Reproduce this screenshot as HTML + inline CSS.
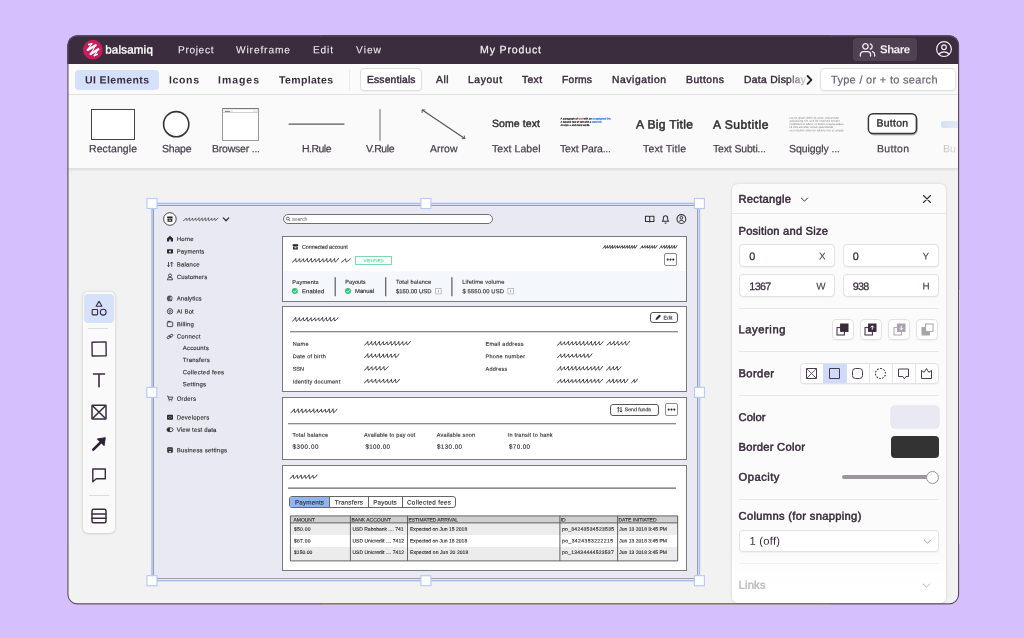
<!DOCTYPE html>
<html lang="en"><head><meta charset="utf-8"><title>Balsamiq - My Product</title>
<style>
*{margin:0;padding:0}
html,body{width:1024px;height:638px;overflow:hidden}
body{background:#d5bffc;font-family:"Liberation Sans",sans-serif;position:relative}
.b{position:absolute;display:block}
.x{overflow:visible}
text{white-space:pre}
#win{position:absolute;left:0;top:0;width:1024px;height:638px;clip-path:inset(35.3px 64.8px 33.6px 67.3px round 10px);background:#f2f2f2;will-change:transform}
</style></head>
<body>
<div id="win">
<div class="b" style="left:67.0px;top:35.0px;width:892.0px;height:28.5px;background:#3b2c3e"></div>
<svg class="b" style="left:82px;top:39px" width="22" height="22" viewBox="0 0 22 22">
<circle cx="10.9" cy="10.7" r="9.9" fill="#c81c5b"/>
<g fill="none" stroke="#fff" stroke-linecap="round" stroke-linejoin="round">
<path stroke-width="2.3" d="M5.7 10.9 L13.6 6.2"/><path stroke-width="2.3" d="M8.6 15.0 L16.3 10.3"/>
<path stroke-width="1.5" d="M6.7 5.5 L9.8 4.6 M12.3 16.6 L15.3 15.2"/>
<path stroke-width="1.1" d="M9.8 4.6 L5.7 10.9 M13.6 6.2 L8.6 15 M16.3 10.3 L12.3 16.6"/>
</g></svg>
<svg class="b x" style="left:103px;top:40px" width="56" height="23"><text x="2.20" y="13.54" transform="rotate(0.03 2.20 13.54)" style="font-size:11.50px;letter-spacing:0.225px" fill="#fff" stroke="#fff" stroke-width="0.38" stroke-linejoin="round">balsamiq</text></svg>
<svg class="b x" style="left:176px;top:40px" width="44" height="21"><text x="2.00" y="13.17" transform="rotate(0.03 2.00 13.17)" style="font-size:10.20px;letter-spacing:0.626px" fill="#efe9f1" stroke="#efe9f1" stroke-width="0.08" stroke-linejoin="round">Project</text></svg>
<svg class="b x" style="left:234px;top:40px" width="62" height="21"><text x="2.00" y="13.17" transform="rotate(0.03 2.00 13.17)" style="font-size:10.20px;letter-spacing:0.871px" fill="#efe9f1" stroke="#efe9f1" stroke-width="0.08" stroke-linejoin="round">Wireframe</text></svg>
<svg class="b x" style="left:311px;top:40px" width="28" height="21"><text x="2.00" y="13.17" transform="rotate(0.03 2.00 13.17)" style="font-size:10.20px;letter-spacing:0.808px" fill="#efe9f1" stroke="#efe9f1" stroke-width="0.08" stroke-linejoin="round">Edit</text></svg>
<svg class="b x" style="left:354px;top:40px" width="33" height="21"><text x="2.00" y="13.17" transform="rotate(0.03 2.00 13.17)" style="font-size:10.20px;letter-spacing:1.025px" fill="#efe9f1" stroke="#efe9f1" stroke-width="0.08" stroke-linejoin="round">View</text></svg>
<svg class="b x" style="left:478px;top:40px" width="69" height="21"><text x="2.00" y="13.32" transform="rotate(0.03 2.00 13.32)" style="font-size:10.60px;letter-spacing:0.822px" fill="#f4eff5" stroke="#f4eff5" stroke-width="0.22" stroke-linejoin="round">My Product</text></svg>
<div class="b" style="left:853.0px;top:38.0px;width:63.5px;height:23.0px;background:#4f4052;border-radius:4px"></div>
<svg class="b" style="left:859px;top:42px" width="17" height="15" viewBox="0 0 24 22" fill="none" stroke="#f3eef4" stroke-width="1.9" stroke-linecap="round" stroke-linejoin="round">
<circle cx="9" cy="6.5" r="4"/><path d="M1.5 20.5v-2a4.5 4.5 0 0 1 4.500-4.5h6a4.500 4.500 0 0 1 4.500 4.500v2"/><path d="M16 2.700a4 4 0 0 1 0 7.700"/><path d="M22.500 20.500v-2a4.500 4.500 0 0 0-3.300-4.300"/></svg>
<svg class="b x" style="left:878px;top:39px" width="38" height="22"><text x="2.00" y="14.20" transform="rotate(0.03 2.00 14.20)" style="font-size:11.40px;letter-spacing:-0.421px;font-weight:700" fill="#f3eef4">Share</text></svg>
<svg class="b" style="left:935px;top:40px" width="18" height="18" viewBox="0 0 18 18" fill="none" stroke="#f3eef4" stroke-width="1.2">
<circle cx="9" cy="9.1" r="7.4"/><circle cx="9" cy="7.2" r="2.3"/><path d="M3.6 14.700a6.500 6.500 0 0 1 10.800 0"/></svg>
<div class="b" style="left:67.0px;top:63.5px;width:892.0px;height:30.5px;background:#fbfbfb;border-bottom:1px solid #e3e3e3"></div>
<div class="b" style="left:75.0px;top:70.0px;width:84.0px;height:20.0px;background:#d5e0fa;border-radius:4px"></div>
<svg class="b x" style="left:83px;top:71px" width="72" height="21"><text x="2.00" y="12.53" transform="rotate(0.03 2.00 12.53)" style="font-size:10.50px;letter-spacing:0.390px;font-weight:700" fill="#3a2b3d">UI Elements</text></svg>
<svg class="b x" style="left:167px;top:71px" width="38" height="21"><text x="2.00" y="12.53" transform="rotate(0.03 2.00 12.53)" style="font-size:10.50px;letter-spacing:0.644px;font-weight:700" fill="#3a2b3d">Icons</text></svg>
<svg class="b x" style="left:216px;top:71px" width="49" height="21"><text x="2.00" y="12.53" transform="rotate(0.03 2.00 12.53)" style="font-size:10.50px;letter-spacing:0.963px;font-weight:700" fill="#3a2b3d">Images</text></svg>
<svg class="b x" style="left:277px;top:71px" width="62" height="21"><text x="2.00" y="12.53" transform="rotate(0.03 2.00 12.53)" style="font-size:10.50px;letter-spacing:0.355px;font-weight:700" fill="#3a2b3d">Templates</text></svg>
<div class="b" style="left:349.0px;top:69.0px;width:1.0px;height:22.0px;background:#ebebeb"></div>
<div class="b" style="left:360.0px;top:68.0px;width:62.0px;height:22.5px;background:#fff;border:1px solid #e0e0e0;border-radius:4px;box-sizing:border-box;box-shadow:0 1px 1px rgba(0,0,0,.05)"></div>
<svg class="b x" style="left:365px;top:70px" width="57" height="21"><text x="2.00" y="13.01" transform="rotate(0.03 2.00 13.01)" style="font-size:10.30px;letter-spacing:0.173px" fill="#3a2b3d" stroke="#3a2b3d" stroke-width="0.42" stroke-linejoin="round">Essentials</text></svg>
<svg class="b x" style="left:434px;top:70px" width="21" height="21"><text x="2.00" y="13.01" transform="rotate(0.03 2.00 13.01)" style="font-size:10.30px;letter-spacing:0.527px" fill="#3a2b3d" stroke="#3a2b3d" stroke-width="0.42" stroke-linejoin="round">All</text></svg>
<svg class="b x" style="left:466px;top:70px" width="42" height="21"><text x="2.00" y="13.01" transform="rotate(0.03 2.00 13.01)" style="font-size:10.30px;letter-spacing:0.615px" fill="#3a2b3d" stroke="#3a2b3d" stroke-width="0.42" stroke-linejoin="round">Layout</text></svg>
<svg class="b x" style="left:520px;top:70px" width="28" height="21"><text x="2.00" y="13.01" transform="rotate(0.03 2.00 13.01)" style="font-size:10.30px;letter-spacing:0.370px" fill="#3a2b3d" stroke="#3a2b3d" stroke-width="0.42" stroke-linejoin="round">Text</text></svg>
<svg class="b x" style="left:560px;top:70px" width="38" height="21"><text x="2.00" y="13.01" transform="rotate(0.03 2.00 13.01)" style="font-size:10.30px;letter-spacing:0.205px" fill="#3a2b3d" stroke="#3a2b3d" stroke-width="0.42" stroke-linejoin="round">Forms</text></svg>
<svg class="b x" style="left:610px;top:70px" width="62" height="21"><text x="2.00" y="13.01" transform="rotate(0.03 2.00 13.01)" style="font-size:10.30px;letter-spacing:0.592px" fill="#3a2b3d" stroke="#3a2b3d" stroke-width="0.42" stroke-linejoin="round">Navigation</text></svg>
<svg class="b x" style="left:684px;top:70px" width="46" height="21"><text x="2.00" y="13.01" transform="rotate(0.03 2.00 13.01)" style="font-size:10.30px;letter-spacing:0.512px" fill="#3a2b3d" stroke="#3a2b3d" stroke-width="0.42" stroke-linejoin="round">Buttons</text></svg>
<svg class="b x" style="left:742px;top:70px" width="70" height="21"><text x="2.00" y="13.01" transform="rotate(0.03 2.00 13.01)" style="font-size:10.30px;letter-spacing:0.328px" fill="#3a2b3d" stroke="#3a2b3d" stroke-width="0.42" stroke-linejoin="round">Data Display</text></svg>
<div class="b" style="left:786.0px;top:66.0px;width:26.0px;height:27.0px;background:linear-gradient(90deg,rgba(251,251,251,0),rgba(251,251,251,.8) 75%,#fbfbfb)"></div>
<svg class="b" style="left:805px;top:74px" width="10" height="12" viewBox="0 0 10 12" fill="none" stroke="#2c2030" stroke-width="1.900" stroke-linecap="round" stroke-linejoin="round"><path d="M2.600 2 L6.400 5.900 L2.600 9.800"/></svg>
<div class="b" style="left:820.0px;top:68.0px;width:135.5px;height:22.5px;background:#fff;border:1px solid #e0e0e0;border-radius:4px;box-sizing:border-box;box-shadow:0 1px 1px rgba(0,0,0,.05)"></div>
<svg class="b x" style="left:829px;top:70px" width="115" height="22"><text x="2.00" y="13.56" transform="rotate(0.03 2.00 13.56)" style="font-size:11.00px;letter-spacing:0.296px" fill="#6f6374" stroke="#6f6374" stroke-width="0.2" stroke-linejoin="round">Type / or + to search</text></svg>
<div class="b" style="left:67.0px;top:95.0px;width:892.0px;height:73.0px;background:#fafafa;border-bottom:1px solid #e0e0e0;box-shadow:0 1px 2.5px rgba(0,0,0,.09)"></div>
<div class="b" style="left:91.0px;top:109.0px;width:44.0px;height:31.0px;background:#fff;border:1px solid #444;box-sizing:border-box"></div>
<svg class="b x" style="left:87px;top:139px" width="56" height="21"><text x="2.00" y="13.18" transform="rotate(0.03 2.00 13.18)" style="font-size:10.50px;letter-spacing:0.090px" fill="#4a3d4e" stroke="#4a3d4e" stroke-width="0.22" stroke-linejoin="round">Rectangle</text></svg>
<svg class="b" style="left:160px;top:108px" width="32" height="32"><circle cx="16.2" cy="16.2" r="12.6" fill="#fff" stroke="#333" stroke-width="1.6"/></svg>
<svg class="b x" style="left:160px;top:139px" width="38" height="21"><text x="2.00" y="13.18" transform="rotate(0.03 2.00 13.18)" style="font-size:10.50px;letter-spacing:-0.216px" fill="#4a3d4e" stroke="#4a3d4e" stroke-width="0.22" stroke-linejoin="round">Shape</text></svg>
<div class="b" style="left:222.0px;top:108.0px;width:37.0px;height:32.5px;background:#fff;border:1px solid #9a9a9a;border-top:1.5px solid #777;box-sizing:border-box"><div class="b" style="left:0;top:0;width:35px;height:3px;background:#ececec;border-bottom:1px solid #d2d2d2"></div><div class="b" style="left:2px;top:1.5px;width:5px;height:1.2px;background:#888"></div><div class="b" style="left:10px;top:1px;width:20px;height:1.5px;background:#fff"></div></div>
<svg class="b x" style="left:210px;top:139px" width="56" height="21"><text x="2.00" y="13.18" transform="rotate(0.03 2.00 13.18)" style="font-size:10.50px;letter-spacing:-0.218px" fill="#4a3d4e" stroke="#4a3d4e" stroke-width="0.22" stroke-linejoin="round">Browser ...</text></svg>
<svg class="b" style="left:285px;top:120px" width="64" height="8"><path d="M4 4.100 H59" stroke="#585858" stroke-width="1.250" stroke-linecap="round"/></svg>
<svg class="b x" style="left:300px;top:139px" width="38" height="21"><text x="2.00" y="13.18" transform="rotate(0.03 2.00 13.18)" style="font-size:10.50px;letter-spacing:-0.519px" fill="#4a3d4e" stroke="#4a3d4e" stroke-width="0.22" stroke-linejoin="round">H.Rule</text></svg>
<svg class="b" style="left:376px;top:105px" width="8" height="40"><path d="M4 4.300 V35.700" stroke="#707070" stroke-width="1.050"/></svg>
<svg class="b x" style="left:364px;top:139px" width="37" height="21"><text x="2.00" y="13.18" transform="rotate(0.03 2.00 13.18)" style="font-size:10.50px;letter-spacing:-0.410px" fill="#4a3d4e" stroke="#4a3d4e" stroke-width="0.22" stroke-linejoin="round">V.Rule</text></svg>
<svg class="b" style="left:418px;top:106px" width="52" height="36" viewBox="0 0 52 36" fill="none" stroke="#555" stroke-width="1.2" stroke-linecap="round" stroke-linejoin="round"><path d="M4.3 4.100 L46.700 32.400"/><path stroke-width="0.9" d="M4.100 6.600 L4.100 3.900 L6.900 4"/><path stroke-width="0.9" d="M44.100 32.700 L46.900 32.600 L46.300 29.900"/></svg>
<svg class="b x" style="left:428px;top:139px" width="36" height="21"><text x="2.00" y="13.18" transform="rotate(0.03 2.00 13.18)" style="font-size:10.50px;letter-spacing:0.020px" fill="#4a3d4e" stroke="#4a3d4e" stroke-width="0.22" stroke-linejoin="round">Arrow</text></svg>
<svg class="b x" style="left:490px;top:114px" width="56" height="21"><text x="2.00" y="12.88" transform="rotate(0.03 2.00 12.88)" style="font-size:10.50px;letter-spacing:0.091px" fill="#2f2f2f" stroke="#2f2f2f" stroke-width="0.4" stroke-linejoin="round">Some text</text></svg>
<svg class="b x" style="left:490px;top:139px" width="57" height="21"><text x="2.00" y="13.18" transform="rotate(0.03 2.00 13.18)" style="font-size:10.50px;letter-spacing:0.071px" fill="#4a3d4e" stroke="#4a3d4e" stroke-width="0.22" stroke-linejoin="round">Text Label</text></svg>
<svg class="b x" style="left:558px;top:114px" width="26" height="10"><text x="2.60" y="5.58" transform="rotate(0.03 2.60 5.58)" style="font-size:2.60px;letter-spacing:0.013px" fill="#2a2a2a" stroke="#2a2a2a" stroke-width="0.2" stroke-linejoin="round">A paragraph of</text></svg>
<svg class="b x" style="left:576px;top:114px" width="13" height="10"><text x="2.56" y="5.58" transform="rotate(0.03 2.56 5.58)" style="font-size:2.60px;letter-spacing:0.014px" fill="#e0453a" stroke="#e0453a" stroke-width="0.2" stroke-linejoin="round">text</text></svg>
<svg class="b x" style="left:581px;top:114px" width="17" height="10"><text x="2.52" y="5.58" transform="rotate(0.03 2.52 5.58)" style="font-size:2.60px;letter-spacing:0.014px" fill="#2a2a2a" stroke="#2a2a2a" stroke-width="0.2" stroke-linejoin="round">with an</text></svg>
<svg class="b x" style="left:590px;top:114px" width="27" height="10"><text x="2.57" y="5.58" transform="rotate(0.03 2.57 5.58)" style="font-size:2.60px;letter-spacing:0.012px" fill="#3a78d8" stroke="#3a78d8" stroke-width="0.2" stroke-linejoin="round">unassigned link.</text></svg>
<svg class="b x" style="left:558px;top:118px" width="39" height="10"><text x="2.60" y="4.78" transform="rotate(0.03 2.60 4.78)" style="font-size:2.60px;letter-spacing:-0.005px" fill="#2a2a2a" stroke="#2a2a2a" stroke-width="0.2" stroke-linejoin="round">A second row of text with a</text></svg>
<svg class="b x" style="left:590px;top:118px" width="19" height="10"><text x="2.12" y="4.78" transform="rotate(0.03 2.12 4.78)" style="font-size:2.60px;letter-spacing:-0.005px" fill="#3a78d8" stroke="#3a78d8" stroke-width="0.2" stroke-linejoin="round">web link.</text></svg>
<svg class="b x" style="left:558px;top:121px" width="17" height="10"><text x="2.60" y="4.98" transform="rotate(0.03 2.60 4.98)" style="font-size:2.60px;letter-spacing:-0.077px" fill="#2a2a2a" stroke="#2a2a2a" stroke-width="0.2" stroke-linejoin="round">An icon</text></svg>
<svg class="b x" style="left:567px;top:121px" width="10" height="10"><text x="2.49" y="4.98" transform="rotate(0.03 2.49 4.98)" style="font-size:2.60px" fill="#2a2a2a" stroke="#2a2a2a" stroke-width="0.2" stroke-linejoin="round">●</text></svg>
<svg class="b x" style="left:569px;top:121px" width="27" height="10"><text x="2.67" y="4.98" transform="rotate(0.03 2.67 4.98)" style="font-size:2.60px;letter-spacing:-0.074px" fill="#2a2a2a" stroke="#2a2a2a" stroke-width="0.2" stroke-linejoin="round">and more words.</text></svg>
<svg class="b x" style="left:558px;top:139px" width="59" height="21"><text x="2.00" y="13.18" transform="rotate(0.03 2.00 13.18)" style="font-size:10.50px;letter-spacing:-0.191px" fill="#4a3d4e" stroke="#4a3d4e" stroke-width="0.22" stroke-linejoin="round">Text Para...</text></svg>
<svg class="b x" style="left:634px;top:114px" width="65" height="23"><text x="2.00" y="14.46" transform="rotate(0.03 2.00 14.46)" style="font-size:12.10px;letter-spacing:0.319px" fill="#2f2f2f" stroke="#2f2f2f" stroke-width="0.5" stroke-linejoin="round">A Big Title</text></svg>
<svg class="b x" style="left:641px;top:139px" width="51" height="21"><text x="2.00" y="13.18" transform="rotate(0.03 2.00 13.18)" style="font-size:10.50px;letter-spacing:0.174px" fill="#4a3d4e" stroke="#4a3d4e" stroke-width="0.22" stroke-linejoin="round">Text Title</text></svg>
<svg class="b x" style="left:711px;top:114px" width="64" height="23"><text x="2.00" y="14.66" transform="rotate(0.03 2.00 14.66)" style="font-size:12.10px;letter-spacing:0.486px" fill="#2f2f2f" stroke="#2f2f2f" stroke-width="0.5" stroke-linejoin="round">A Subtitle</text></svg>
<svg class="b x" style="left:711px;top:139px" width="61" height="21"><text x="2.00" y="13.18" transform="rotate(0.03 2.00 13.18)" style="font-size:10.50px;letter-spacing:-0.155px" fill="#4a3d4e" stroke="#4a3d4e" stroke-width="0.22" stroke-linejoin="round">Text Subti...</text></svg>
<svg class="b x" style="left:787px;top:114px" width="58" height="10"><text x="2.50" y="4.70" transform="rotate(0.03 2.50 4.70)" style="font-size:2.70px;letter-spacing:0.052px" fill="#727272">Lorem ipsum dolor sit amet, consectetur</text></svg>
<svg class="b x" style="left:787px;top:117px" width="59" height="10"><text x="2.50" y="4.82" transform="rotate(0.03 2.50 4.82)" style="font-size:2.70px;letter-spacing:0.105px" fill="#727272">adipisicing elit, sed do eiusmod tempor</text></svg>
<svg class="b x" style="left:787px;top:120px" width="63" height="10"><text x="2.50" y="4.94" transform="rotate(0.03 2.50 4.94)" style="font-size:2.70px;letter-spacing:0.078px" fill="#727272">incididunt ut labore et dolore magna aliqua.</text></svg>
<svg class="b x" style="left:787px;top:123px" width="52" height="10"><text x="2.50" y="5.06" transform="rotate(0.03 2.50 5.06)" style="font-size:2.70px;letter-spacing:-0.088px" fill="#727272">Ut enim ad minim veniam, quis nostrud</text></svg>
<svg class="b x" style="left:787px;top:126px" width="63" height="10"><text x="2.50" y="5.18" transform="rotate(0.03 2.50 5.18)" style="font-size:2.70px;letter-spacing:0.130px" fill="#727272">exercitation ullamco laboris nisi ut aliquip</text></svg>
<svg class="b x" style="left:787px;top:139px" width="59" height="21"><text x="2.00" y="13.18" transform="rotate(0.03 2.00 13.18)" style="font-size:10.50px;letter-spacing:-0.086px" fill="#4a3d4e" stroke="#4a3d4e" stroke-width="0.22" stroke-linejoin="round">Squiggly ...</text></svg>
<svg class="b" style="left:864px;top:110px" width="58" height="30"><rect x="5.2" y="4.6" width="48" height="20.300" rx="4.600" fill="#bbb" stroke="#aaa" stroke-width="1"/><rect x="4.400" y="3.700" width="48" height="19.900" rx="4.600" fill="#fff" stroke="#383838" stroke-width="1.500"/></svg>
<svg class="b x" style="left:874px;top:114px" width="40" height="21"><text x="2.50" y="12.44" transform="rotate(0.03 2.50 12.44)" style="font-size:10.40px;letter-spacing:0.286px" fill="#2b2b2b" stroke="#2b2b2b" stroke-width="0.35" stroke-linejoin="round">Button</text></svg>
<svg class="b x" style="left:875px;top:139px" width="40" height="21"><text x="2.00" y="13.18" transform="rotate(0.03 2.00 13.18)" style="font-size:10.50px;letter-spacing:0.329px" fill="#4a3d4e" stroke="#4a3d4e" stroke-width="0.22" stroke-linejoin="round">Button</text></svg>
<div class="b" style="left:941.0px;top:120.8px;width:20.0px;height:7.6px;background:#c4d5f3;border-radius:2px"></div>
<svg class="b x" style="left:941px;top:139px" width="21" height="21"><text x="2.00" y="13.18" transform="rotate(0.03 2.00 13.18)" style="font-size:10.50px" fill="#4a3d4e" opacity="0.45">Bu</text></svg>
<div class="b" style="left:925.0px;top:96.0px;width:34.0px;height:71.0px;background:linear-gradient(90deg,rgba(250,250,250,0),rgba(250,250,250,.6))"></div>
<div class="b" style="left:152.0px;top:204.0px;width:547.0px;height:376.5px;background:#e9e9f3"></div>
<div class="b" style="left:153.0px;top:205.0px;width:545.0px;height:374.4px;background:#e9e9f3;border:1px solid #a0a0a4;box-sizing:border-box"></div>
<svg class="b x" style="left:174px;top:232px" width="25" height="15"><text x="2.70" y="8.96" transform="rotate(0.03 2.70 8.96)" style="font-size:6.00px;letter-spacing:0.298px" fill="#2e2e2e" stroke="#2e2e2e" stroke-width="0.14" stroke-linejoin="round">Home</text></svg>
<svg class="b x" style="left:174px;top:245px" width="36" height="15"><text x="2.70" y="8.56" transform="rotate(0.03 2.70 8.56)" style="font-size:6.00px;letter-spacing:0.117px" fill="#2e2e2e" stroke="#2e2e2e" stroke-width="0.14" stroke-linejoin="round">Payments</text></svg>
<svg class="b x" style="left:174px;top:258px" width="31" height="15"><text x="2.70" y="8.56" transform="rotate(0.03 2.70 8.56)" style="font-size:6.00px;letter-spacing:0.220px" fill="#2e2e2e" stroke="#2e2e2e" stroke-width="0.14" stroke-linejoin="round">Balance</text></svg>
<svg class="b x" style="left:174px;top:270px" width="39" height="15"><text x="2.70" y="8.96" transform="rotate(0.03 2.70 8.96)" style="font-size:6.00px;letter-spacing:0.187px" fill="#2e2e2e" stroke="#2e2e2e" stroke-width="0.14" stroke-linejoin="round">Customers</text></svg>
<svg class="b x" style="left:174px;top:292px" width="33" height="15"><text x="2.70" y="8.56" transform="rotate(0.03 2.70 8.56)" style="font-size:6.00px;letter-spacing:0.099px" fill="#2e2e2e" stroke="#2e2e2e" stroke-width="0.14" stroke-linejoin="round">Analytics</text></svg>
<svg class="b x" style="left:174px;top:305px" width="26" height="15"><text x="2.70" y="8.46" transform="rotate(0.03 2.70 8.46)" style="font-size:6.00px;letter-spacing:0.152px" fill="#2e2e2e" stroke="#2e2e2e" stroke-width="0.14" stroke-linejoin="round">AI Bot</text></svg>
<svg class="b x" style="left:174px;top:318px" width="26" height="15"><text x="2.70" y="8.16" transform="rotate(0.03 2.70 8.16)" style="font-size:6.00px;letter-spacing:0.182px" fill="#2e2e2e" stroke="#2e2e2e" stroke-width="0.14" stroke-linejoin="round">Billing</text></svg>
<svg class="b x" style="left:174px;top:330px" width="32" height="15"><text x="2.70" y="8.56" transform="rotate(0.03 2.70 8.56)" style="font-size:6.00px;letter-spacing:0.242px" fill="#2e2e2e" stroke="#2e2e2e" stroke-width="0.14" stroke-linejoin="round">Connect</text></svg>
<svg class="b x" style="left:174px;top:392px" width="28" height="15"><text x="2.70" y="8.66" transform="rotate(0.03 2.70 8.66)" style="font-size:6.00px;letter-spacing:0.193px" fill="#2e2e2e" stroke="#2e2e2e" stroke-width="0.14" stroke-linejoin="round">Orders</text></svg>
<svg class="b x" style="left:174px;top:411px" width="41" height="15"><text x="2.70" y="8.46" transform="rotate(0.03 2.70 8.46)" style="font-size:6.00px;letter-spacing:0.250px" fill="#2e2e2e" stroke="#2e2e2e" stroke-width="0.14" stroke-linejoin="round">Developers</text></svg>
<svg class="b x" style="left:174px;top:423px" width="48" height="15"><text x="2.70" y="8.86" transform="rotate(0.03 2.70 8.86)" style="font-size:6.00px;letter-spacing:0.163px" fill="#2e2e2e" stroke="#2e2e2e" stroke-width="0.14" stroke-linejoin="round">View test data</text></svg>
<svg class="b x" style="left:174px;top:444px" width="59" height="15"><text x="2.70" y="8.16" transform="rotate(0.03 2.70 8.16)" style="font-size:6.00px;letter-spacing:0.226px" fill="#2e2e2e" stroke="#2e2e2e" stroke-width="0.14" stroke-linejoin="round">Business settings</text></svg>
<svg class="b x" style="left:180px;top:341px" width="34" height="15"><text x="2.80" y="8.96" transform="rotate(0.03 2.80 8.96)" style="font-size:6.00px;letter-spacing:0.174px" fill="#2e2e2e" stroke="#2e2e2e" stroke-width="0.14" stroke-linejoin="round">Accounts</text></svg>
<svg class="b x" style="left:180px;top:353px" width="35" height="15"><text x="2.80" y="8.96" transform="rotate(0.03 2.80 8.96)" style="font-size:6.00px;letter-spacing:0.223px" fill="#2e2e2e" stroke="#2e2e2e" stroke-width="0.14" stroke-linejoin="round">Transfers</text></svg>
<svg class="b x" style="left:180px;top:366px" width="50" height="15"><text x="2.80" y="8.16" transform="rotate(0.03 2.80 8.16)" style="font-size:6.00px;letter-spacing:0.244px" fill="#2e2e2e" stroke="#2e2e2e" stroke-width="0.14" stroke-linejoin="round">Collected fees</text></svg>
<svg class="b x" style="left:180px;top:378px" width="32" height="15"><text x="2.80" y="8.16" transform="rotate(0.03 2.80 8.16)" style="font-size:6.00px;letter-spacing:0.217px" fill="#2e2e2e" stroke="#2e2e2e" stroke-width="0.14" stroke-linejoin="round">Settings</text></svg>
<div class="b" style="left:283.0px;top:214.0px;width:210.4px;height:10.0px;background:#fff;border:1px solid #707070;border-radius:5px;box-sizing:border-box"></div>
<svg class="b x" style="left:290px;top:213px" width="24" height="14"><text x="2.00" y="7.77" transform="rotate(0.03 2.00 7.77)" style="font-size:5.20px;letter-spacing:-0.022px" fill="#8a8a8a" stroke="#8a8a8a" stroke-width="0.14" stroke-linejoin="round">search</text></svg>
<div class="b" style="left:282.0px;top:236.0px;width:405.0px;height:66.0px;background:#fff;border:1px solid #7a7a7a;box-sizing:border-box"></div>
<div class="b" style="left:283.0px;top:270.5px;width:403.0px;height:30.5px;background:#f4f8fd"></div>
<svg class="b x" style="left:300px;top:241px" width="54" height="14"><text x="2.00" y="7.84" transform="rotate(0.03 2.00 7.84)" style="font-size:5.40px;letter-spacing:-0.046px" fill="#2e2e2e" stroke="#2e2e2e" stroke-width="0.14" stroke-linejoin="round">Connected account</text></svg>
<div class="b" style="left:355.2px;top:256.0px;width:36.7px;height:9.0px;border:1px solid #7adbb0;box-sizing:border-box;background:#fff"></div>
<svg class="b x" style="left:361px;top:255px" width="28" height="13"><text x="2.50" y="7.15" transform="rotate(0.03 2.50 7.15)" style="font-size:4.30px;letter-spacing:0.024px" fill="#6ad6a7" stroke="#6ad6a7" stroke-width="0.14" stroke-linejoin="round">VERIFIED</text></svg>
<div class="b" style="left:664.0px;top:253.0px;width:13.0px;height:13.0px;background:#fff;border:1px solid #8c8c8c;border-radius:2px;box-sizing:border-box"></div>
<svg class="b x" style="left:290px;top:276px" width="35" height="14"><text x="2.30" y="8.02" transform="rotate(0.03 2.30 8.02)" style="font-size:5.60px;letter-spacing:0.186px" fill="#2e2e2e" stroke="#2e2e2e" stroke-width="0.14" stroke-linejoin="round">Payments</text></svg>
<svg class="b x" style="left:343px;top:276px" width="29" height="14"><text x="2.30" y="7.82" transform="rotate(0.03 2.30 7.82)" style="font-size:5.60px;letter-spacing:-0.006px" fill="#2e2e2e" stroke="#2e2e2e" stroke-width="0.14" stroke-linejoin="round">Payouts</text></svg>
<svg class="b x" style="left:393px;top:276px" width="44" height="14"><text x="2.90" y="7.82" transform="rotate(0.03 2.90 7.82)" style="font-size:5.60px;letter-spacing:0.192px" fill="#2e2e2e" stroke="#2e2e2e" stroke-width="0.14" stroke-linejoin="round">Total balance</text></svg>
<svg class="b x" style="left:460px;top:276px" width="51" height="14"><text x="2.20" y="7.82" transform="rotate(0.03 2.20 7.82)" style="font-size:5.60px;letter-spacing:0.206px" fill="#2e2e2e" stroke="#2e2e2e" stroke-width="0.14" stroke-linejoin="round">Lifetime volume</text></svg>
<svg class="b x" style="left:300px;top:285px" width="31" height="15"><text x="2.00" y="8.32" transform="rotate(0.03 2.00 8.32)" style="font-size:5.90px;letter-spacing:0.091px" fill="#2e2e2e" stroke="#2e2e2e" stroke-width="0.14" stroke-linejoin="round">Enabled</text></svg>
<svg class="b x" style="left:353px;top:285px" width="28" height="15"><text x="2.00" y="8.12" transform="rotate(0.03 2.00 8.12)" style="font-size:5.90px;letter-spacing:-0.030px" fill="#2e2e2e" stroke="#2e2e2e" stroke-width="0.14" stroke-linejoin="round">Manual</text></svg>
<svg class="b x" style="left:394px;top:285px" width="44" height="15"><text x="2.00" y="8.32" transform="rotate(0.03 2.00 8.32)" style="font-size:5.90px;letter-spacing:0.008px" fill="#2e2e2e" stroke="#2e2e2e" stroke-width="0.14" stroke-linejoin="round">$150.00 USD</text></svg>
<svg class="b x" style="left:460px;top:285px" width="50" height="15"><text x="2.50" y="8.32" transform="rotate(0.03 2.50 8.32)" style="font-size:5.90px;letter-spacing:0.096px" fill="#2e2e2e" stroke="#2e2e2e" stroke-width="0.14" stroke-linejoin="round">$ 5550.00 USD</text></svg>
<svg class="b" style="left:0;top:0" width="1024" height="638" viewBox="0 0 1024 638"><circle cx="169.900" cy="219" r="6.300" fill="#fff" stroke="#333" stroke-width="0.900"/><path d="M167.200 216.600 h5.400 v1.800 h-5.400 Z M167.500 218.900 h4.800 v2.900 h-4.800 Z" fill="#222"/><path d="M168.700 219.700 h2.400 v0.900 h-2.400 Z" fill="#fff"/><path d="M183.50 220.70 Q185.47 219.42 186.20 218.06 Q186.04 219.55 186.68 220.54 Q188.53 219.45 189.38 217.83 Q189.22 219.59 189.86 220.77 Q191.77 219.43 192.56 218.03 Q192.40 219.55 193.04 220.57 Q194.82 219.44 195.74 217.92 Q195.58 219.58 196.22 220.68 Q197.94 219.46 198.92 217.69 Q198.76 219.62 199.40 220.91 Q201.41 219.45 202.10 217.82 Q201.94 219.60 202.58 220.78 Q204.58 219.46 205.28 217.75 Q205.12 219.61 205.76 220.85 Q207.52 219.46 208.46 217.71 Q208.30 219.62 208.94 220.89 Q210.97 219.42 211.64 218.06 Q211.48 219.55 212.12 220.54 Q213.94 219.43 214.82 218.00 Q214.66 219.56 215.30 220.60 Q217.29 219.42 218.00 218.10" fill="none" stroke="#4a4a4a" stroke-width="0.85" stroke-linecap="round" stroke-linejoin="round"/><path d="M223.300 217.900 L226 220.700 L228.700 217.900" fill="none" stroke="#333" stroke-width="1.3" stroke-linecap="round" stroke-linejoin="round"/><path d="M167.0 238.5 l3 -2.700 l3 2.700 v3 h-2.200 v-2 h-1.600 v2 h-2.200 Z" fill="#2a2a2a"/><rect x="167.0" y="249.3" width="6" height="4.200" rx="0.800" fill="#2a2a2a"/><circle cx="170.0" cy="251.4" r="1" fill="#e9e9f3"/><path d="M168.5 262.0 v4.600 m-1.300 -1.300 l1.300 1.400 l1.300 -1.400 M171.7 266.8 v-4.600 m-1.300 1.300 l1.300 -1.400 l1.300 1.400" fill="none" stroke="#2a2a2a" stroke-width="0.800"/><circle cx="170.0" cy="275.4" r="1.500" fill="none" stroke="#2a2a2a" stroke-width="0.800"/><path d="M167.4 279.8 a2.600 2.600 0 0 1 5.200 0 Z" fill="none" stroke="#2a2a2a" stroke-width="0.800"/><circle cx="169.8" cy="298.4" r="2.900" fill="#555"/><path d="M169.8 298.6 l3 -2.400 M169.8 298.9 h3.300" stroke="#e9e9f3" stroke-width="0.800" fill="none"/><circle cx="170.0" cy="311.3" r="2.700" fill="none" stroke="#2a2a2a" stroke-width="0.800"/><circle cx="170.0" cy="311.3" r="1.100" fill="none" stroke="#2a2a2a" stroke-width="0.700"/><rect x="167.3" y="322.0" width="5.400" height="4.600" rx="0.700" fill="none" stroke="#2a2a2a" stroke-width="0.800"/><path d="M167.5 321.4 h3" stroke="#2a2a2a" stroke-width="0.900"/><ellipse cx="168.8" cy="337.2" rx="1.900" ry="1.200" transform="rotate(-35 168.8 337.2)" fill="none" stroke="#2a2a2a" stroke-width="0.800"/><ellipse cx="171.2" cy="335.8" rx="1.900" ry="1.200" transform="rotate(-35 171.2 335.8)" fill="none" stroke="#2a2a2a" stroke-width="0.800"/><path d="M167.0 396.1 h1 l0.800 3.300 h3.300 l0.600 -2.300 h-4.200" fill="none" stroke="#2a2a2a" stroke-width="0.800"/><circle cx="169.2" cy="400.8" r="0.550" fill="#2a2a2a"/><circle cx="171.8" cy="400.8" r="0.550" fill="#2a2a2a"/><rect x="167.0" y="414.8" width="6" height="5" rx="0.800" fill="#2a2a2a"/><path d="M169.4 416.3 l-1 1 l1 1 M170.6 416.3 l1 1 l-1 1" stroke="#e9e9f3" stroke-width="0.600" fill="none"/><rect x="167.0" y="427.8" width="6" height="3.800" rx="1.900" fill="none" stroke="#2a2a2a" stroke-width="0.800"/><path d="M168.9 427.8 a1.900 1.900 0 0 0 0 3.800 h1 v-3.800 Z" fill="#2a2a2a"/><rect x="167.2" y="447.2" width="5.600" height="5.600" rx="1.100" fill="#2a2a2a"/><path d="M168.1 449.1 h3.800" stroke="#e9e9f3" stroke-width="0.500"/><rect x="168.9" y="451.1" width="2.200" height="1.100" fill="#e9e9f3"/><circle cx="287.800" cy="218.600" r="1.500" fill="none" stroke="#333" stroke-width="0.700"/><path d="M288.900 219.700 l1.200 1.200" stroke="#333" stroke-width="0.800"/><path d="M645.500 216.200 h3.300 q0.900 0 0.900 0.900 v5 q0 -0.700 -0.900 -0.700 h-3.300 Z M653.900 216.200 h-3.300 q-0.900 0 -0.900 0.900 v5 q0 -0.700 0.900 -0.700 h3.300 Z" fill="none" stroke="#333" stroke-width="1.050" stroke-linejoin="round"/><path d="M662.300 221.300 h6.400 q-1.100 -1 -1.100 -2.600 v-0.800 a2.100 2.100 0 0 0 -4.200 0 v0.800 q0 1.600 -1.100 2.600 Z M664.800 222.600 a0.800 0.800 0 0 0 1.500 0" fill="none" stroke="#333" stroke-width="1.050" stroke-linejoin="round"/><circle cx="681.400" cy="219" r="4.400" fill="none" stroke="#333" stroke-width="1.050"/><circle cx="681.400" cy="217.800" r="1.350" fill="none" stroke="#333" stroke-width="1"/><path d="M678.600 222 a3.200 3.200 0 0 1 5.600 0" fill="none" stroke="#333" stroke-width="1"/><path d="M292.700 244.300 h5.400 v1.700 h-5.400 Z M293 246.500 h4.800 v3 h-4.800 Z" fill="#222"/><path d="M294.300 247.300 h2.200 v1 h-2.200 Z" fill="#fff"/><path d="M292.50 262.10 Q294.91 260.47 295.80 258.61 Q295.61 260.64 296.38 261.99 Q299.04 260.47 299.68 258.60 Q299.49 260.64 300.26 262.00 Q302.60 260.46 303.56 258.69 Q303.37 260.62 304.15 261.91 Q306.39 260.48 307.45 258.45 Q307.25 260.67 308.03 262.15 Q310.44 260.49 311.33 258.39 Q311.13 260.68 311.91 262.21 Q314.12 260.46 315.21 258.75 Q315.01 260.61 315.79 261.85 Q317.91 260.49 319.09 258.39 Q318.90 260.68 319.67 262.21 Q321.92 260.46 322.97 258.70 Q322.78 260.62 323.55 261.90 Q326.14 260.48 326.85 258.48 Q326.66 260.66 327.44 262.12 Q330.01 260.48 330.74 258.49 Q330.54 260.66 331.32 262.11 Q333.68 260.48 334.62 258.48 Q334.42 260.66 335.20 262.12 Q337.57 260.49 338.50 258.35" fill="none" stroke="#3a3a3a" stroke-width="0.95" stroke-linecap="round" stroke-linejoin="round"/><path d="M341.50 262.10 Q344.52 260.46 345.64 258.66 Q345.39 260.63 346.36 261.94 Q349.17 260.45 350.50 258.76" fill="none" stroke="#3a3a3a" stroke-width="0.95" stroke-linecap="round" stroke-linejoin="round"/><path d="M603.00 248.35 Q604.52 247.05 605.09 245.36 Q604.96 247.21 605.45 248.44 Q607.07 247.04 607.54 245.55 Q607.42 247.17 607.91 248.25 Q609.37 247.05 610.00 245.36 Q609.87 247.21 610.36 248.44 Q611.71 247.06 612.45 245.34 Q612.33 247.21 612.82 248.46 Q614.29 247.04 614.91 245.52 Q614.78 247.18 615.27 248.28 Q616.98 247.04 617.36 245.52 Q617.24 247.18 617.73 248.28 Q619.25 247.02 619.82 245.66 Q619.69 247.15 620.18 248.14 Q621.70 247.04 622.27 245.51 Q622.15 247.18 622.64 248.29 Q624.28 247.04 624.73 245.48 Q624.60 247.18 625.09 248.32 Q626.58 247.04 627.18 245.48 Q627.06 247.18 627.55 248.32 Q628.87 247.05 629.64 245.35 Q629.51 247.21 630.00 248.45 Q631.74 247.05 632.09 245.40 Q631.97 247.20 632.46 248.40 Q633.88 247.05 634.55 245.45 Q634.42 247.19 634.91 248.35 Q636.43 247.06 637.00 245.27" fill="none" stroke="#444" stroke-width="1.0" stroke-linecap="round" stroke-linejoin="round"/><path d="M640.50 248.35 Q641.99 247.03 642.55 245.62 Q642.43 247.16 642.91 248.18 Q644.40 247.03 644.96 245.62 Q644.84 247.16 645.32 248.18 Q646.60 247.03 647.36 245.55 Q647.24 247.17 647.73 248.25 Q649.36 247.05 649.77 245.36 Q649.65 247.21 650.14 248.44 Q651.79 247.03 652.18 245.59 Q652.06 247.16 652.54 248.21 Q654.20 247.05 654.59 245.41 Q654.47 247.20 654.95 248.39 Q656.49 247.04 657.00 245.54" fill="none" stroke="#444" stroke-width="1.0" stroke-linecap="round" stroke-linejoin="round"/><path d="M659.50 248.35 Q661.08 247.03 661.67 245.60 Q661.54 247.16 662.05 248.20 Q663.71 247.05 664.23 245.39 Q664.10 247.20 664.61 248.41 Q666.13 247.06 666.78 245.26 Q666.65 247.23 667.16 248.54 Q668.69 247.06 669.34 245.28 Q669.21 247.22 669.72 248.52 Q671.41 247.05 671.89 245.40 Q671.76 247.20 672.27 248.40 Q673.67 247.05 674.45 245.39 Q674.32 247.20 674.83 248.41 Q676.62 247.03 677.00 245.63" fill="none" stroke="#444" stroke-width="1.0" stroke-linecap="round" stroke-linejoin="round"/><circle cx="667.7" cy="259.600" r="1.050" fill="#2a2a2a"/><circle cx="670.5" cy="259.600" r="1.050" fill="#2a2a2a"/><circle cx="673.3" cy="259.600" r="1.050" fill="#2a2a2a"/><circle cx="294.9" cy="291.100" r="3" fill="#2fc27a"/><path d="M293.5 291.200 l1.100 1.100 l1.900 -2.100" fill="none" stroke="#fff" stroke-width="0.800" stroke-linecap="round" stroke-linejoin="round"/><circle cx="348.0" cy="291.100" r="3" fill="#2fc27a"/><path d="M346.6 291.200 l1.100 1.100 l1.900 -2.100" fill="none" stroke="#fff" stroke-width="0.800" stroke-linecap="round" stroke-linejoin="round"/><rect x="435.7" y="288.500" width="5.400" height="5.400" fill="#fff" stroke="#999" stroke-width="0.600"/><path d="M438.4 290 v2.500" stroke="#777" stroke-width="0.700"/><rect x="507.9" y="288.500" width="5.400" height="5.400" fill="#fff" stroke="#999" stroke-width="0.600"/><path d="M510.6 290 v2.500" stroke="#777" stroke-width="0.700"/><path d="M335.2 277.300 V296.200" stroke="#606060" stroke-width="1.250"/><path d="M385.7 277.300 V296.200" stroke="#606060" stroke-width="1.250"/><path d="M451.9 277.300 V296.200" stroke="#606060" stroke-width="1.250"/></svg>
<div class="b" style="left:282.0px;top:306.0px;width:405.0px;height:86.4px;background:#fff;border:1px solid #7a7a7a;box-sizing:border-box"></div>
<div class="b" style="left:649.6px;top:311.8px;width:28.2px;height:11.7px;background:#fff;border:1px solid #555;border-radius:3px;box-sizing:border-box"></div>
<svg class="b x" style="left:661px;top:312px" width="17" height="14"><text x="2.50" y="7.57" transform="rotate(0.03 2.50 7.57)" style="font-size:5.20px;letter-spacing:0.013px" fill="#2e2e2e" stroke="#2e2e2e" stroke-width="0.14" stroke-linejoin="round">Edit</text></svg>
<svg class="b x" style="left:290px;top:338px" width="24" height="14"><text x="2.70" y="7.78" transform="rotate(0.03 2.70 7.78)" style="font-size:5.50px;letter-spacing:0.410px" fill="#2e2e2e" stroke="#2e2e2e" stroke-width="0.14" stroke-linejoin="round">Name</text></svg>
<svg class="b x" style="left:290px;top:350px" width="42" height="14"><text x="2.70" y="8.18" transform="rotate(0.03 2.70 8.18)" style="font-size:5.50px;letter-spacing:0.262px" fill="#2e2e2e" stroke="#2e2e2e" stroke-width="0.14" stroke-linejoin="round">Date of birth</text></svg>
<svg class="b x" style="left:290px;top:363px" width="20" height="14"><text x="2.70" y="7.78" transform="rotate(0.03 2.70 7.78)" style="font-size:5.50px;letter-spacing:-0.004px" fill="#2e2e2e" stroke="#2e2e2e" stroke-width="0.14" stroke-linejoin="round">SSN</text></svg>
<svg class="b x" style="left:290px;top:375px" width="56" height="14"><text x="2.70" y="8.48" transform="rotate(0.03 2.70 8.48)" style="font-size:5.50px;letter-spacing:0.255px" fill="#2e2e2e" stroke="#2e2e2e" stroke-width="0.14" stroke-linejoin="round">Identity document</text></svg>
<svg class="b x" style="left:483px;top:338px" width="46" height="14"><text x="2.50" y="7.78" transform="rotate(0.03 2.50 7.78)" style="font-size:5.50px;letter-spacing:0.263px" fill="#2e2e2e" stroke="#2e2e2e" stroke-width="0.14" stroke-linejoin="round">Email address</text></svg>
<svg class="b x" style="left:483px;top:350px" width="48" height="14"><text x="2.50" y="8.18" transform="rotate(0.03 2.50 8.18)" style="font-size:5.50px;letter-spacing:0.311px" fill="#2e2e2e" stroke="#2e2e2e" stroke-width="0.14" stroke-linejoin="round">Phone number</text></svg>
<svg class="b x" style="left:483px;top:363px" width="30" height="14"><text x="2.50" y="7.78" transform="rotate(0.03 2.50 7.78)" style="font-size:5.50px;letter-spacing:0.254px" fill="#2e2e2e" stroke="#2e2e2e" stroke-width="0.14" stroke-linejoin="round">Address</text></svg>
<div class="b" style="left:282.0px;top:397.4px;width:405.0px;height:62.2px;background:#fff;border:1px solid #7a7a7a;box-sizing:border-box"></div>
<div class="b" style="left:609.5px;top:403.5px;width:49.5px;height:12.2px;background:#fff;border:1px solid #555;border-radius:3px;box-sizing:border-box"></div>
<svg class="b x" style="left:622px;top:404px" width="35" height="14"><text x="2.70" y="7.37" transform="rotate(0.03 2.70 7.37)" style="font-size:5.20px" fill="#2e2e2e" stroke="#2e2e2e" stroke-width="0.14" stroke-linejoin="round">Send funds</text></svg>
<div class="b" style="left:665.0px;top:403.0px;width:13.0px;height:13.0px;background:#fff;border:1px solid #8c8c8c;border-radius:2px;box-sizing:border-box"></div>
<svg class="b x" style="left:290px;top:429px" width="44" height="14"><text x="2.50" y="7.78" transform="rotate(0.03 2.50 7.78)" style="font-size:5.50px;letter-spacing:0.257px" fill="#2e2e2e" stroke="#2e2e2e" stroke-width="0.14" stroke-linejoin="round">Total balance</text></svg>
<svg class="b x" style="left:362px;top:429px" width="60" height="14"><text x="2.00" y="7.78" transform="rotate(0.03 2.00 7.78)" style="font-size:5.50px;letter-spacing:0.179px" fill="#2e2e2e" stroke="#2e2e2e" stroke-width="0.14" stroke-linejoin="round">Available to pay out</text></svg>
<svg class="b x" style="left:434px;top:429px" width="47" height="14"><text x="2.70" y="7.78" transform="rotate(0.03 2.70 7.78)" style="font-size:5.50px;letter-spacing:0.217px" fill="#2e2e2e" stroke="#2e2e2e" stroke-width="0.14" stroke-linejoin="round">Available soon</text></svg>
<svg class="b x" style="left:505px;top:429px" width="53" height="14"><text x="2.60" y="7.78" transform="rotate(0.03 2.60 7.78)" style="font-size:5.50px;letter-spacing:0.255px" fill="#2e2e2e" stroke="#2e2e2e" stroke-width="0.14" stroke-linejoin="round">In transit to bank</text></svg>
<svg class="b x" style="left:290px;top:440px" width="34" height="15"><text x="2.50" y="8.73" transform="rotate(0.03 2.50 8.73)" style="font-size:6.20px;letter-spacing:0.598px" fill="#2e2e2e" stroke="#2e2e2e" stroke-width="0.14" stroke-linejoin="round">$300.00</text></svg>
<svg class="b x" style="left:363px;top:440px" width="33" height="15"><text x="2.50" y="8.73" transform="rotate(0.03 2.50 8.73)" style="font-size:6.20px;letter-spacing:0.348px" fill="#2e2e2e" stroke="#2e2e2e" stroke-width="0.14" stroke-linejoin="round">$100.00</text></svg>
<svg class="b x" style="left:435px;top:440px" width="33" height="15"><text x="2.00" y="8.73" transform="rotate(0.03 2.00 8.73)" style="font-size:6.20px;letter-spacing:0.431px" fill="#2e2e2e" stroke="#2e2e2e" stroke-width="0.14" stroke-linejoin="round">$130.00</text></svg>
<svg class="b x" style="left:507px;top:440px" width="29" height="15"><text x="2.00" y="8.73" transform="rotate(0.03 2.00 8.73)" style="font-size:6.20px;letter-spacing:0.407px" fill="#2e2e2e" stroke="#2e2e2e" stroke-width="0.14" stroke-linejoin="round">$70.00</text></svg>
<div class="b" style="left:282.0px;top:465.0px;width:405.0px;height:105.5px;background:#fff;border:1px solid #7a7a7a;box-sizing:border-box"></div>
<div class="b" style="left:289.0px;top:496.3px;width:167.0px;height:12.0px;background:#fff;border:1px solid #666;border-radius:3px;box-sizing:border-box;overflow:hidden"><div class="b" style="left:0;top:0;width:39.500px;height:12px;background:#8fb5f4"></div><div class="b" style="left:39.200px;top:0;width:1px;height:12px;background:#666"></div><div class="b" style="left:78px;top:0;width:1px;height:12px;background:#666"></div><div class="b" style="left:111.500px;top:0;width:1px;height:12px;background:#666"></div></div>
<svg class="b x" style="left:293px;top:496px" width="37" height="15"><text x="2.00" y="8.57" transform="rotate(0.03 2.00 8.57)" style="font-size:6.30px;letter-spacing:0.141px" fill="#2e2e2e" stroke="#2e2e2e" stroke-width="0.14" stroke-linejoin="round">Payments</text></svg>
<svg class="b x" style="left:332px;top:496px" width="37" height="15"><text x="2.70" y="8.57" transform="rotate(0.03 2.70 8.57)" style="font-size:6.30px;letter-spacing:0.241px" fill="#2e2e2e" stroke="#2e2e2e" stroke-width="0.14" stroke-linejoin="round">Transfers</text></svg>
<svg class="b x" style="left:371px;top:496px" width="32" height="15"><text x="2.20" y="8.57" transform="rotate(0.03 2.20 8.57)" style="font-size:6.30px;letter-spacing:0.123px" fill="#2e2e2e" stroke="#2e2e2e" stroke-width="0.14" stroke-linejoin="round">Payouts</text></svg>
<svg class="b x" style="left:405px;top:496px" width="52" height="15"><text x="2.00" y="8.57" transform="rotate(0.03 2.00 8.57)" style="font-size:6.30px;letter-spacing:0.314px" fill="#2e2e2e" stroke="#2e2e2e" stroke-width="0.14" stroke-linejoin="round">Collected fees</text></svg>
<div class="b" style="left:290.4px;top:515.6px;width:387.3px;height:45.4px;background:#fff"></div>
<div class="b" style="left:290.4px;top:515.6px;width:387.3px;height:7.4px;background:#cfcfcf"></div>
<div class="b" style="left:290.4px;top:523.0px;width:387.3px;height:11.7px;background:#ececec"></div>
<div class="b" style="left:290.4px;top:547.0px;width:387.3px;height:14.0px;background:#ececec"></div>
<svg class="b x" style="left:291px;top:514px" width="30" height="13"><text x="2.50" y="7.40" transform="rotate(0.03 2.50 7.40)" style="font-size:5.00px;letter-spacing:-0.033px" fill="#2e2e2e" stroke="#2e2e2e" stroke-width="0.14" stroke-linejoin="round">AMOUNT</text></svg>
<svg class="b x" style="left:349px;top:514px" width="48" height="13"><text x="2.50" y="7.40" transform="rotate(0.03 2.50 7.40)" style="font-size:5.00px;letter-spacing:0.004px" fill="#2e2e2e" stroke="#2e2e2e" stroke-width="0.14" stroke-linejoin="round">BANK ACCOUNT</text></svg>
<svg class="b x" style="left:406px;top:514px" width="58" height="13"><text x="2.50" y="7.40" transform="rotate(0.03 2.50 7.40)" style="font-size:5.00px;letter-spacing:-0.055px" fill="#2e2e2e" stroke="#2e2e2e" stroke-width="0.14" stroke-linejoin="round">ESTIMATED ARRIVAL</text></svg>
<svg class="b x" style="left:559px;top:514px" width="13" height="13"><text x="2.00" y="7.40" transform="rotate(0.03 2.00 7.40)" style="font-size:5.00px;letter-spacing:-0.450px" fill="#2e2e2e" stroke="#2e2e2e" stroke-width="0.14" stroke-linejoin="round">ID</text></svg>
<svg class="b x" style="left:616px;top:514px" width="46" height="13"><text x="2.50" y="7.40" transform="rotate(0.03 2.50 7.40)" style="font-size:5.00px;letter-spacing:-0.012px" fill="#2e2e2e" stroke="#2e2e2e" stroke-width="0.14" stroke-linejoin="round">DATE INITIATED</text></svg>
<svg class="b x" style="left:292px;top:523px" width="25" height="13"><text x="2.00" y="7.70" transform="rotate(0.03 2.00 7.70)" style="font-size:5.00px;letter-spacing:0.241px" fill="#2e2e2e" stroke="#2e2e2e" stroke-width="0.14" stroke-linejoin="round">$50.00</text></svg>
<svg class="b x" style="left:350px;top:523px" width="60" height="13"><text x="2.40" y="7.70" transform="rotate(0.03 2.40 7.70)" style="font-size:5.00px;letter-spacing:-0.016px" fill="#2e2e2e" stroke="#2e2e2e" stroke-width="0.14" stroke-linejoin="round">USD Rabobank .... 741</text></svg>
<svg class="b x" style="left:408px;top:523px" width="66" height="13"><text x="2.00" y="7.70" transform="rotate(0.03 2.00 7.70)" style="font-size:5.00px;letter-spacing:0.022px" fill="#2e2e2e" stroke="#2e2e2e" stroke-width="0.14" stroke-linejoin="round">Expected on Jun 15 2018</text></svg>
<svg class="b x" style="left:560px;top:523px" width="60" height="13"><text x="2.00" y="7.70" transform="rotate(0.03 2.00 7.70)" style="font-size:5.00px;letter-spacing:0.295px" fill="#2e2e2e" stroke="#2e2e2e" stroke-width="0.14" stroke-linejoin="round">po_34243534523535</text></svg>
<svg class="b x" style="left:617px;top:523px" width="56" height="13"><text x="2.30" y="7.70" transform="rotate(0.03 2.30 7.70)" style="font-size:5.00px;letter-spacing:0.009px" fill="#2e2e2e" stroke="#2e2e2e" stroke-width="0.14" stroke-linejoin="round">Jun 13 2018 3:45 PM</text></svg>
<svg class="b x" style="left:292px;top:535px" width="25" height="13"><text x="2.00" y="7.50" transform="rotate(0.03 2.00 7.50)" style="font-size:5.00px;letter-spacing:0.241px" fill="#2e2e2e" stroke="#2e2e2e" stroke-width="0.14" stroke-linejoin="round">$67.00</text></svg>
<svg class="b x" style="left:350px;top:535px" width="60" height="13"><text x="2.40" y="7.50" transform="rotate(0.03 2.40 7.50)" style="font-size:5.00px;letter-spacing:0.021px" fill="#2e2e2e" stroke="#2e2e2e" stroke-width="0.14" stroke-linejoin="round">USD Unicredit .... 7412</text></svg>
<svg class="b x" style="left:408px;top:535px" width="66" height="13"><text x="2.00" y="7.50" transform="rotate(0.03 2.00 7.50)" style="font-size:5.00px;letter-spacing:0.022px" fill="#2e2e2e" stroke="#2e2e2e" stroke-width="0.14" stroke-linejoin="round">Expected on Jun 18 2018</text></svg>
<svg class="b x" style="left:560px;top:535px" width="59" height="13"><text x="2.00" y="7.50" transform="rotate(0.03 2.00 7.50)" style="font-size:5.00px;letter-spacing:0.434px" fill="#2e2e2e" stroke="#2e2e2e" stroke-width="0.14" stroke-linejoin="round">po_3424353222215</text></svg>
<svg class="b x" style="left:617px;top:535px" width="56" height="13"><text x="2.30" y="7.50" transform="rotate(0.03 2.30 7.50)" style="font-size:5.00px;letter-spacing:0.009px" fill="#2e2e2e" stroke="#2e2e2e" stroke-width="0.14" stroke-linejoin="round">Jun 13 2018 3:45 PM</text></svg>
<svg class="b x" style="left:292px;top:547px" width="27" height="13"><text x="2.00" y="7.10" transform="rotate(0.03 2.00 7.10)" style="font-size:5.00px;letter-spacing:0.038px" fill="#2e2e2e" stroke="#2e2e2e" stroke-width="0.14" stroke-linejoin="round">$150.00</text></svg>
<svg class="b x" style="left:350px;top:547px" width="60" height="13"><text x="2.40" y="7.10" transform="rotate(0.03 2.40 7.10)" style="font-size:5.00px;letter-spacing:0.021px" fill="#2e2e2e" stroke="#2e2e2e" stroke-width="0.14" stroke-linejoin="round">USD Unicredit .... 7412</text></svg>
<svg class="b x" style="left:408px;top:547px" width="67" height="13"><text x="2.00" y="7.10" transform="rotate(0.03 2.00 7.10)" style="font-size:5.00px;letter-spacing:0.068px" fill="#2e2e2e" stroke="#2e2e2e" stroke-width="0.14" stroke-linejoin="round">Expected on Jun 20 2018</text></svg>
<svg class="b x" style="left:560px;top:547px" width="60" height="13"><text x="2.00" y="7.10" transform="rotate(0.03 2.00 7.10)" style="font-size:5.00px;letter-spacing:0.277px" fill="#2e2e2e" stroke="#2e2e2e" stroke-width="0.14" stroke-linejoin="round">po_13434444523537</text></svg>
<svg class="b x" style="left:617px;top:547px" width="56" height="13"><text x="2.30" y="7.10" transform="rotate(0.03 2.30 7.10)" style="font-size:5.00px;letter-spacing:0.009px" fill="#2e2e2e" stroke="#2e2e2e" stroke-width="0.14" stroke-linejoin="round">Jun 13 2018 3:45 PM</text></svg>
<svg class="b" style="left:0;top:0" width="1024" height="638" viewBox="0 0 1024 638"><path d="M292.50 321.10 Q294.88 319.50 295.76 317.27 Q295.57 319.71 296.34 321.33 Q298.83 319.47 299.60 317.63 Q299.41 319.63 300.18 320.97 Q302.75 319.46 303.44 317.70 Q303.25 319.62 304.02 320.90 Q306.69 319.50 307.28 317.31 Q307.09 319.70 307.86 321.29 Q310.09 319.46 311.12 317.68 Q310.93 319.62 311.70 320.92 Q314.03 319.46 314.96 317.73 Q314.77 319.61 315.54 320.87 Q317.68 319.46 318.80 317.74 Q318.61 319.61 319.38 320.86 Q321.75 319.50 322.64 317.31 Q322.45 319.70 323.22 321.29 Q325.40 319.48 326.48 317.53 Q326.29 319.65 327.06 321.07 Q329.74 319.50 330.32 317.32 Q330.13 319.70 330.90 321.28 Q333.36 319.46 334.16 317.65 Q333.97 319.63 334.74 320.95 Q337.16 319.46 338.00 317.73" fill="none" stroke="#3a3a3a" stroke-width="0.95" stroke-linecap="round" stroke-linejoin="round"/><path d="M655.800 319.700 l0.500 -1.700 l3.200 -3.200 l1.200 1.200 l-3.200 3.200 Z" fill="#222" stroke="#222" stroke-width="0.400" stroke-linejoin="round"/><path d="M290 331.700 H678" stroke="#666" stroke-width="1.100"/><path d="M364.50 345.10 Q366.91 343.49 367.80 341.39 Q367.61 343.68 368.38 345.21 Q371.11 343.48 371.68 341.51 Q371.49 343.66 372.26 345.09 Q374.82 343.50 375.56 341.31 Q375.37 343.70 376.15 345.29 Q378.65 343.50 379.45 341.26 Q379.25 343.71 380.03 345.34 Q382.19 343.47 383.33 341.59 Q383.13 343.64 383.91 345.01 Q386.63 343.46 387.21 341.72 Q387.01 343.62 387.79 344.88 Q389.92 343.49 391.09 341.35 Q390.90 343.69 391.67 345.25 Q393.75 343.50 394.97 341.29 Q394.78 343.70 395.55 345.31 Q398.22 343.49 398.85 341.39 Q398.66 343.68 399.44 345.21 Q401.66 343.48 402.74 341.49 Q402.54 343.66 403.32 345.11 Q405.76 343.46 406.62 341.75 Q406.42 343.61 407.20 344.85 Q409.46 343.50 410.50 341.33" fill="none" stroke="#3a3a3a" stroke-width="0.95" stroke-linecap="round" stroke-linejoin="round"/><path d="M364.50 357.50 Q366.92 355.91 367.81 353.63 Q367.62 356.11 368.40 357.77 Q370.50 355.89 371.71 353.76 Q371.52 356.09 372.30 357.64 Q374.94 355.87 375.61 354.05 Q375.42 356.03 376.19 357.35 Q378.42 355.90 379.51 353.65 Q379.31 356.11 380.09 357.75 Q382.76 355.88 383.41 353.87 Q383.21 356.07 383.99 357.53 Q386.34 355.89 387.31 353.75 Q387.11 356.09 387.89 357.65 Q390.15 355.88 391.20 353.91 Q391.01 356.06 391.79 357.49 Q393.86 355.90 395.10 353.74 Q394.91 356.09 395.69 357.66 Q398.24 355.85 399.00 354.16" fill="none" stroke="#3a3a3a" stroke-width="0.95" stroke-linecap="round" stroke-linejoin="round"/><path d="M364.50 370.10 Q366.99 368.50 367.91 366.30 Q367.71 368.70 368.52 370.30 Q370.70 368.46 371.93 366.69 Q371.73 368.62 372.53 369.91 Q374.74 368.49 375.95 366.44 Q375.75 368.67 376.55 370.16 Q378.84 368.49 379.97 366.41 Q379.76 368.68 380.57 370.19 Q382.73 368.48 383.98 366.46 Q383.78 368.67 384.59 370.14 Q386.75 368.46 388.00 366.72" fill="none" stroke="#3a3a3a" stroke-width="0.95" stroke-linecap="round" stroke-linejoin="round"/><path d="M364.50 382.80 Q366.95 381.17 367.86 379.32 Q367.66 381.34 368.45 382.68 Q370.63 381.16 371.82 379.44 Q371.62 381.31 372.41 382.56 Q374.93 381.19 375.77 379.07 Q375.57 381.39 376.36 382.93 Q378.79 381.16 379.73 379.44 Q379.53 381.31 380.32 382.56 Q382.65 381.18 383.68 379.22 Q383.48 381.36 384.27 382.78 Q386.85 381.19 387.64 379.12 Q387.44 381.38 388.23 382.88 Q391.01 381.19 391.59 379.14 Q391.39 381.37 392.18 382.86 Q394.28 381.19 395.55 379.14 Q395.35 381.37 396.14 382.86 Q398.75 381.16 399.50 379.36" fill="none" stroke="#3a3a3a" stroke-width="0.95" stroke-linecap="round" stroke-linejoin="round"/><path d="M557.50 345.10 Q559.88 343.48 560.76 341.55 Q560.57 343.65 561.34 345.05 Q563.81 343.46 564.60 341.74 Q564.41 343.61 565.18 344.86 Q567.90 343.49 568.44 341.37 Q568.25 343.69 569.02 345.23 Q571.32 343.46 572.28 341.67 Q572.09 343.63 572.86 344.93 Q574.97 343.49 576.12 341.43 Q575.93 343.67 576.70 345.17 Q578.84 343.49 579.96 341.41 Q579.77 343.68 580.54 345.19 Q583.25 343.51 583.80 341.24 Q583.61 343.71 584.38 345.36 Q587.05 343.48 587.64 341.51 Q587.45 343.66 588.22 345.09 Q590.66 343.50 591.48 341.27 Q591.29 343.71 592.06 345.33 Q594.63 343.49 595.32 341.38 Q595.13 343.68 595.90 345.22 Q598.05 343.47 599.16 341.56 Q598.97 343.65 599.74 345.04 Q602.03 343.47 603.00 341.64" fill="none" stroke="#3a3a3a" stroke-width="0.95" stroke-linecap="round" stroke-linejoin="round"/><path d="M607.00 345.10 Q609.38 343.46 610.27 341.73 Q610.08 343.61 610.85 344.87 Q613.45 343.49 614.12 341.38 Q613.92 343.68 614.69 345.22 Q616.86 343.50 617.96 341.34 Q617.77 343.69 618.54 345.26 Q621.15 343.46 621.81 341.71 Q621.62 343.62 622.38 344.89 Q624.46 343.50 625.65 341.34 Q625.46 343.69 626.23 345.26 Q628.40 343.49 629.50 341.38" fill="none" stroke="#3a3a3a" stroke-width="0.95" stroke-linecap="round" stroke-linejoin="round"/><path d="M557.50 357.50 Q559.92 355.87 560.81 353.96 Q560.62 356.05 561.40 357.44 Q563.88 355.89 564.71 353.76 Q564.52 356.09 565.30 357.64 Q567.37 355.87 568.61 353.96 Q568.42 356.05 569.19 357.44 Q571.66 355.86 572.51 354.13 Q572.31 356.01 573.09 357.27 Q575.80 355.90 576.41 353.75 Q576.21 356.09 576.99 357.65 Q579.14 355.85 580.31 354.16 Q580.11 356.01 580.89 357.24 Q583.57 355.89 584.20 353.82 Q584.01 356.08 584.79 357.58 Q587.42 355.88 588.10 353.86 Q587.91 356.07 588.69 357.54 Q591.09 355.89 592.00 353.85" fill="none" stroke="#3a3a3a" stroke-width="0.95" stroke-linecap="round" stroke-linejoin="round"/><path d="M557.50 370.10 Q559.85 368.49 560.73 366.38 Q560.54 368.68 561.30 370.22 Q563.62 368.46 564.53 366.69 Q564.34 368.62 565.09 369.91 Q567.23 368.50 568.32 366.28 Q568.13 368.70 568.89 370.32 Q571.56 368.48 572.12 366.51 Q571.93 368.66 572.69 370.09 Q574.91 368.50 575.92 366.26 Q575.73 368.71 576.49 370.34 Q578.76 368.47 579.72 366.61 Q579.53 368.64 580.28 369.99 Q582.81 368.47 583.51 366.62 Q583.32 368.64 584.08 369.98 Q586.76 368.48 587.31 366.46 Q587.12 368.67 587.88 370.14 Q590.03 368.45 591.11 366.76 Q590.92 368.61 591.68 369.84 Q594.19 368.49 594.91 366.41 Q594.72 368.68 595.47 370.19 Q597.56 368.48 598.70 366.47 Q598.51 368.67 599.27 370.13 Q601.97 368.48 602.50 366.47" fill="none" stroke="#3a3a3a" stroke-width="0.95" stroke-linecap="round" stroke-linejoin="round"/><path d="M606.50 370.10 Q608.84 368.48 609.70 366.50 Q609.51 368.66 610.27 370.10 Q612.73 368.47 613.47 366.64 Q613.28 368.63 614.03 369.96 Q616.40 368.51 617.23 366.25 Q617.05 368.71 617.80 370.35 Q619.86 368.45 621.00 366.75" fill="none" stroke="#3a3a3a" stroke-width="0.95" stroke-linecap="round" stroke-linejoin="round"/><path d="M557.50 382.80 Q559.85 381.16 560.73 379.37 Q560.54 381.33 561.30 382.63 Q563.97 381.18 564.53 379.24 Q564.34 381.35 565.09 382.76 Q567.29 381.16 568.32 379.37 Q568.13 381.33 568.89 382.63 Q571.28 381.15 572.12 379.46 Q571.93 381.31 572.69 382.54 Q575.16 381.16 575.92 379.36 Q575.73 381.33 576.49 382.64 Q578.83 381.19 579.72 379.13 Q579.53 381.37 580.28 382.87 Q582.50 381.19 583.51 379.07 Q583.32 381.39 584.08 382.93 Q586.65 381.19 587.31 379.15 Q587.12 381.37 587.88 382.85 Q589.96 381.16 591.11 379.37 Q590.92 381.33 591.68 382.63 Q594.03 381.18 594.91 379.19 Q594.72 381.36 595.47 382.81 Q597.66 381.19 598.70 379.12 Q598.51 381.38 599.27 382.88 Q601.57 381.16 602.50 379.35" fill="none" stroke="#3a3a3a" stroke-width="0.95" stroke-linecap="round" stroke-linejoin="round"/><path d="M606.50 382.80 Q608.78 381.16 609.62 379.43 Q609.44 381.31 610.18 382.57 Q612.72 381.21 613.30 378.94 Q613.12 381.41 613.85 383.06 Q616.17 381.17 616.97 379.34 Q616.79 381.33 617.53 382.66 Q619.80 381.20 620.65 379.05 Q620.47 381.39 621.20 382.95 Q623.16 381.20 624.32 379.00 Q624.14 381.40 624.88 383.00 Q627.33 381.18 628.00 379.21" fill="none" stroke="#3a3a3a" stroke-width="0.95" stroke-linecap="round" stroke-linejoin="round"/><path d="M631.50 382.80 Q633.51 381.16 634.26 379.36 Q634.09 381.33 634.74 382.64 Q636.54 381.20 637.50 379.01" fill="none" stroke="#3a3a3a" stroke-width="0.95" stroke-linecap="round" stroke-linejoin="round"/><path d="M291.00 412.60 Q293.41 410.99 294.30 408.88 Q294.11 411.18 294.88 412.72 Q297.08 411.00 298.18 408.84 Q297.99 411.19 298.76 412.76 Q301.00 411.00 302.06 408.81 Q301.87 411.20 302.65 412.79 Q305.26 410.97 305.95 409.15 Q305.75 411.13 306.53 412.45 Q309.12 410.96 309.83 409.19 Q309.63 411.12 310.41 412.41 Q313.08 411.00 313.71 408.76 Q313.51 411.21 314.29 412.84 Q316.83 410.97 317.59 409.07 Q317.40 411.15 318.17 412.53 Q320.37 410.97 321.47 409.15 Q321.28 411.13 322.05 412.45 Q324.14 410.96 325.35 409.18 Q325.16 411.12 325.94 412.42 Q328.62 411.00 329.24 408.75 Q329.04 411.21 329.82 412.85 Q332.29 411.00 333.12 408.79 Q332.92 411.20 333.70 412.81 Q336.14 410.96 337.00 409.18" fill="none" stroke="#3a3a3a" stroke-width="0.95" stroke-linecap="round" stroke-linejoin="round"/><path d="M618.300 412.300 v-5 m-1.100 1.200 l1.100 -1.300 l1.100 1.300 M621 407 v5 m-1.100 -1.200 l1.100 1.300 l1.100 -1.300" fill="none" stroke="#222" stroke-width="0.800"/><circle cx="668.7" cy="409.600" r="1.050" fill="#2a2a2a"/><circle cx="671.5" cy="409.600" r="1.050" fill="#2a2a2a"/><circle cx="674.3" cy="409.600" r="1.050" fill="#2a2a2a"/><path d="M288 423.700 H676" stroke="#666" stroke-width="1.100"/><path d="M290.00 478.60 Q292.44 476.99 293.35 474.92 Q293.15 477.18 293.94 478.68 Q296.04 476.97 297.29 475.08 Q297.09 477.14 297.88 478.52 Q299.98 476.99 301.23 474.95 Q301.04 477.17 301.82 478.65 Q304.30 476.97 305.18 475.14 Q304.98 477.13 305.77 478.46 Q307.87 477.00 309.12 474.80 Q308.92 477.20 309.71 478.80 Q312.02 476.95 313.06 475.26 Q312.86 477.11 313.65 478.34 Q316.29 476.97 317.00 475.06" fill="none" stroke="#3a3a3a" stroke-width="0.95" stroke-linecap="round" stroke-linejoin="round"/><path d="M288 488.100 H676" stroke="#666" stroke-width="1.100"/><path d="M290.4 515.900 H677.7 V560.900 H290.4 Z M290.4 522.900 H677.7" fill="none" stroke="#555" stroke-width="0.900"/><path d="M350.4 515.800 V560.800" stroke="#555" stroke-width="0.900"/><path d="M407.5 515.800 V560.800" stroke="#555" stroke-width="0.900"/><path d="M559.9 515.800 V560.800" stroke="#555" stroke-width="0.900"/><path d="M617.6 515.800 V560.800" stroke="#555" stroke-width="0.900"/></svg>
<svg class="b" style="left:0;top:0" width="1024" height="638"><rect x="152" y="203.500" width="547.400" height="377.200" fill="none" stroke="#a8bef6" stroke-width="1.600"/></svg>
<svg class="b" style="left:142px;top:193px" width="20" height="20"><rect x="5.00" y="5.50" width="10" height="10" fill="#fff" stroke="#b7c9f5" stroke-width="1.150"/></svg>
<svg class="b" style="left:415px;top:193px" width="20" height="20"><rect x="5.90" y="5.50" width="10" height="10" fill="#fff" stroke="#b7c9f5" stroke-width="1.150"/></svg>
<svg class="b" style="left:689px;top:193px" width="20" height="20"><rect x="5.40" y="5.50" width="10" height="10" fill="#fff" stroke="#b7c9f5" stroke-width="1.150"/></svg>
<svg class="b" style="left:141px;top:382px" width="20" height="20"><rect x="5.80" y="5.40" width="10" height="10" fill="#fff" stroke="#b7c9f5" stroke-width="1.150"/></svg>
<svg class="b" style="left:689px;top:382px" width="20" height="20"><rect x="5.40" y="5.40" width="10" height="10" fill="#fff" stroke="#b7c9f5" stroke-width="1.150"/></svg>
<svg class="b" style="left:142px;top:570px" width="20" height="20"><rect x="5.00" y="5.70" width="10" height="10" fill="#fff" stroke="#b7c9f5" stroke-width="1.150"/></svg>
<svg class="b" style="left:415px;top:570px" width="20" height="20"><rect x="5.90" y="5.70" width="10" height="10" fill="#fff" stroke="#b7c9f5" stroke-width="1.150"/></svg>
<svg class="b" style="left:689px;top:570px" width="20" height="20"><rect x="5.40" y="5.70" width="10" height="10" fill="#fff" stroke="#b7c9f5" stroke-width="1.150"/></svg>
<div class="b" style="left:82.5px;top:292.0px;width:32.5px;height:241.0px;background:#fafafa;border-radius:5px;box-shadow:0 0 3px rgba(0,0,0,.16),0 1px 2px rgba(0,0,0,.08)"></div>
<div class="b" style="left:84.0px;top:294.0px;width:30.0px;height:29.3px;background:#d6e1fb;border-radius:4px"></div>
<svg class="b" style="left:89.7px;top:299.3px" width="18" height="18" viewBox="0 0 18 18" fill="none" stroke="#3a2b3d" stroke-width="1.1" stroke-linecap="round" stroke-linejoin="round"><path d="M9 2.300 L11.900 7.300 L6.100 7.300 Z"/><rect x="2.200" y="10.500" width="5.400" height="5.400" rx="0.800"/><circle cx="13.200" cy="13.200" r="2.900"/></svg>
<div class="b" style="left:88.0px;top:328.3px;width:20.0px;height:1.0px;background:#dcdcdc"></div>
<svg class="b" style="left:89.5px;top:340.0px" width="18" height="18" viewBox="0 0 18 18" fill="none" stroke="#3a2b3d" stroke-width="1.4" stroke-linecap="round" stroke-linejoin="round"><path d="M2 2.200 L16 1.900 L16.200 15.700 L2.200 16 Z"/></svg>
<svg class="b" style="left:89.5px;top:371.0px" width="18" height="18" viewBox="0 0 18 18" fill="none" stroke="#3a2b3d" stroke-width="1.6" stroke-linecap="round" stroke-linejoin="round"><path d="M3.500 3 H14.500 M9 3 V15.800"/></svg>
<svg class="b" style="left:89.5px;top:403.0px" width="18" height="18" viewBox="0 0 18 18" fill="none" stroke="#3a2b3d" stroke-width="1.5" stroke-linecap="round" stroke-linejoin="round"><rect x="2" y="2.200" width="14" height="13.800" rx="0.500"/><path d="M3 3.200 L15 15 M15 3.200 L3 15"/></svg>
<svg class="b" style="left:89.500px;top:434.500px" width="18" height="18" viewBox="0 0 18 18"><path d="M3.300 14.700 L12 6" stroke="#2e1f33" stroke-width="2.600" stroke-linecap="round" fill="none"/><path d="M7.300 3.900 L15.300 2.700 L14.100 10.700 Z" fill="#2e1f33" stroke="#2e1f33" stroke-width="0.900" stroke-linejoin="round"/></svg>
<svg class="b" style="left:89.5px;top:465.5px" width="18" height="18" viewBox="0 0 18 18" fill="none" stroke="#3a2b3d" stroke-width="1.4" stroke-linecap="round" stroke-linejoin="round"><path d="M2.800 3 H15.300 V12.800 H6.300 L2.800 15.800 Z"/></svg>
<div class="b" style="left:88.5px;top:494.7px;width:20.0px;height:1.0px;background:#dcdcdc"></div>
<svg class="b" style="left:89.5px;top:506.5px" width="18" height="18" viewBox="0 0 18 18" fill="none" stroke="#3a2b3d" stroke-width="1.45" stroke-linecap="round" stroke-linejoin="round"><rect x="2" y="2.300" width="14" height="13.400" rx="1.800"/><path d="M2 6.900 H16 M2 11.300 H16"/></svg>
<div class="b" style="left:732.0px;top:184.0px;width:214.0px;height:419.0px;background:#fbfbfb;border-radius:6px;box-shadow:0 0 3px rgba(0,0,0,.14),0 1px 2px rgba(0,0,0,.06)"></div>
<svg class="b x" style="left:736px;top:189px" width="61" height="22"><text x="2.50" y="13.63" transform="rotate(0.03 2.50 13.63)" style="font-size:11.20px;letter-spacing:0.258px" fill="#3a2b3d" stroke="#3a2b3d" stroke-width="0.5" stroke-linejoin="round">Rectangle</text></svg>
<svg class="b" style="left:800px;top:196px" width="9" height="7" viewBox="0 0 9 7" fill="none" stroke="#3a2b3d" stroke-width="1" stroke-linecap="round" stroke-linejoin="round"><path d="M1.300 2 L4.500 5.200 L7.700 2"/></svg>
<svg class="b" style="left:922px;top:194px" width="10" height="10" viewBox="0 0 10 10" fill="none" stroke="#3a2b3d" stroke-width="1.100" stroke-linecap="round"><path d="M1.500 1.500 L8.500 8.500 M8.500 1.500 L1.500 8.500"/></svg>
<div class="b" style="left:732.0px;top:213.2px;width:214.0px;height:1.0px;background:#e6e6e6"></div>
<svg class="b x" style="left:736px;top:221px" width="98" height="22"><text x="2.50" y="13.63" transform="rotate(0.03 2.50 13.63)" style="font-size:11.20px;letter-spacing:0.185px" fill="#3a2b3d" stroke="#3a2b3d" stroke-width="0.5" stroke-linejoin="round">Position and Size</text></svg>
<div class="b" style="left:739.0px;top:244.3px;width:96.0px;height:22.4px;background:#fff;border:1px solid #e2e2e2;border-radius:4px;box-sizing:border-box;box-shadow:0 1px 1px rgba(0,0,0,.04)"></div>
<svg class="b x" style="left:747px;top:247px" width="15" height="22"><text x="2.30" y="12.99" transform="rotate(0.03 2.30 12.99)" style="font-size:10.80px" fill="#3a2b3d" stroke="#3a2b3d" stroke-width="0.25" stroke-linejoin="round">0</text></svg>
<svg class="b x" style="left:816px;top:247px" width="15" height="20"><text x="2.99" y="12.56" transform="rotate(0.03 2.99 12.56)" style="font-size:9.90px" fill="#4a3d4e" stroke="#4a3d4e" stroke-width="0.15" stroke-linejoin="round">X</text></svg>
<div class="b" style="left:842.5px;top:244.3px;width:96.0px;height:22.4px;background:#fff;border:1px solid #e2e2e2;border-radius:4px;box-sizing:border-box;box-shadow:0 1px 1px rgba(0,0,0,.04)"></div>
<svg class="b x" style="left:850px;top:247px" width="15" height="22"><text x="2.80" y="12.99" transform="rotate(0.03 2.80 12.99)" style="font-size:10.80px" fill="#3a2b3d" stroke="#3a2b3d" stroke-width="0.25" stroke-linejoin="round">0</text></svg>
<svg class="b x" style="left:920px;top:247px" width="15" height="20"><text x="2.49" y="12.56" transform="rotate(0.03 2.49 12.56)" style="font-size:9.90px" fill="#4a3d4e" stroke="#4a3d4e" stroke-width="0.15" stroke-linejoin="round">Y</text></svg>
<div class="b" style="left:739.0px;top:274.3px;width:96.0px;height:22.4px;background:#fff;border:1px solid #e2e2e2;border-radius:4px;box-sizing:border-box;box-shadow:0 1px 1px rgba(0,0,0,.04)"></div>
<svg class="b x" style="left:747px;top:277px" width="30" height="22"><text x="2.30" y="12.99" transform="rotate(0.03 2.30 12.99)" style="font-size:10.80px;letter-spacing:-0.675px" fill="#3a2b3d" stroke="#3a2b3d" stroke-width="0.25" stroke-linejoin="round">1367</text></svg>
<svg class="b x" style="left:814px;top:277px" width="18" height="20"><text x="2.20" y="12.56" transform="rotate(0.03 2.20 12.56)" style="font-size:9.90px" fill="#4a3d4e" stroke="#4a3d4e" stroke-width="0.15" stroke-linejoin="round">W</text></svg>
<div class="b" style="left:842.5px;top:274.3px;width:96.0px;height:22.4px;background:#fff;border:1px solid #e2e2e2;border-radius:4px;box-sizing:border-box;box-shadow:0 1px 1px rgba(0,0,0,.04)"></div>
<svg class="b x" style="left:850px;top:277px" width="25" height="22"><text x="2.80" y="12.99" transform="rotate(0.03 2.80 12.99)" style="font-size:10.80px;letter-spacing:-0.760px" fill="#3a2b3d" stroke="#3a2b3d" stroke-width="0.25" stroke-linejoin="round">938</text></svg>
<svg class="b x" style="left:920px;top:277px" width="16" height="20"><text x="2.49" y="12.56" transform="rotate(0.03 2.49 12.56)" style="font-size:9.90px" fill="#4a3d4e" stroke="#4a3d4e" stroke-width="0.15" stroke-linejoin="round">H</text></svg>
<div class="b" style="left:739.0px;top:307.5px;width:199.5px;height:1.0px;background:#e6e6e6"></div>
<div class="b" style="left:739.0px;top:351.4px;width:199.5px;height:1.0px;background:#e6e6e6"></div>
<div class="b" style="left:739.0px;top:395.3px;width:199.5px;height:1.0px;background:#e6e6e6"></div>
<div class="b" style="left:739.0px;top:499.0px;width:199.5px;height:1.0px;background:#e6e6e6"></div>
<div class="b" style="left:739.0px;top:562.8px;width:199.5px;height:1.0px;background:#e6e6e6"></div>
<svg class="b x" style="left:736px;top:320px" width="55" height="22"><text x="2.50" y="13.23" transform="rotate(0.03 2.50 13.23)" style="font-size:11.20px;letter-spacing:0.577px" fill="#3a2b3d" stroke="#3a2b3d" stroke-width="0.5" stroke-linejoin="round">Layering</text></svg>
<div class="b" style="left:831.5px;top:318.8px;width:22.0px;height:21.5px;background:#fff;border:1px solid #e2e2e2;border-radius:4px;box-sizing:border-box;box-shadow:0 1px 1px rgba(0,0,0,.04)"></div>
<svg class="b" style="left:836.0px;top:323.1px" width="13" height="13" viewBox="0 0 13 13"><rect x="1" y="4.600" width="7.400" height="7.400" fill="#fbfbfb" stroke="#3a2b3d" stroke-width="1"/><rect x="4.600" y="1" width="7.400" height="7.400" fill="#3a2b3d" stroke="#3a2b3d" stroke-width="1"/></svg>
<div class="b" style="left:859.8px;top:318.8px;width:22.0px;height:21.5px;background:#fff;border:1px solid #e2e2e2;border-radius:4px;box-sizing:border-box;box-shadow:0 1px 1px rgba(0,0,0,.04)"></div>
<svg class="b" style="left:864.3px;top:323.1px" width="13" height="13" viewBox="0 0 13 13"><rect x="1" y="4.600" width="7.400" height="7.400" fill="#fbfbfb" stroke="#3a2b3d" stroke-width="1"/><rect x="4.600" y="1" width="7.400" height="7.400" fill="#3a2b3d" stroke="#3a2b3d" stroke-width="1"/><path d="M8.300 6.800 V2.900 M6.600 4.500 L8.300 2.800 L10 4.500" stroke="#fff" stroke-width="0.900" fill="none"/></svg>
<div class="b" style="left:888.1px;top:318.8px;width:22.0px;height:21.5px;background:#fff;border:1px solid #e2e2e2;border-radius:4px;box-sizing:border-box;box-shadow:0 1px 1px rgba(0,0,0,.04)"></div>
<svg class="b" style="left:892.6px;top:323.1px" width="13" height="13" viewBox="0 0 13 13"><rect x="1" y="4.600" width="7.400" height="7.400" fill="#fff" stroke="#a9a2ab" stroke-width="1"/><rect x="4.600" y="1" width="7.400" height="7.400" fill="#a9a2ab" stroke="#a9a2ab" stroke-width="1"/><path d="M8.300 2.600 V6.700 M6.600 5.100 L8.300 6.800 L10 5.100" stroke="#fff" stroke-width="0.900" fill="none"/></svg>
<div class="b" style="left:916.4px;top:318.8px;width:22.0px;height:21.5px;background:#fff;border:1px solid #e2e2e2;border-radius:4px;box-sizing:border-box;box-shadow:0 1px 1px rgba(0,0,0,.04)"></div>
<svg class="b" style="left:920.9px;top:323.1px" width="13" height="13" viewBox="0 0 13 13"><rect x="1" y="4.600" width="7.400" height="7.400" fill="#a9a2ab" stroke="#a9a2ab" stroke-width="1"/><rect x="4.600" y="1" width="7.400" height="7.400" fill="#fff" stroke="#a9a2ab" stroke-width="1"/></svg>
<svg class="b x" style="left:736px;top:363px" width="44" height="22"><text x="2.50" y="14.13" transform="rotate(0.03 2.50 14.13)" style="font-size:11.20px;letter-spacing:0.377px" fill="#3a2b3d" stroke="#3a2b3d" stroke-width="0.5" stroke-linejoin="round">Border</text></svg>
<div class="b" style="left:800.0px;top:362.5px;width:139.0px;height:21.5px;background:#fff;border:1px solid #e2e2e2;border-radius:4px;box-sizing:border-box;box-shadow:0 1px 1px rgba(0,0,0,.04);overflow:hidden"><div class="b" style="left:22px;top:0;width:23.500px;height:21px;background:#cfdbf9"></div><div class="b" style="left:68.0px;top:0;width:1px;height:21px;background:#e6e6e6"></div><div class="b" style="left:91.0px;top:0;width:1px;height:21px;background:#e6e6e6"></div><div class="b" style="left:114.0px;top:0;width:1px;height:21px;background:#e6e6e6"></div></div>
<svg class="b" style="left:804.8px;top:367.0px" width="13" height="13" viewBox="0 0 13 13" fill="none" stroke="#4a3c4d" stroke-width="1" stroke-linejoin="round"><rect x="1.500" y="1.500" width="10" height="10"/><path d="M1.500 1.500 L11.500 11.500 M11.500 1.500 L1.500 11.500" stroke-width="0.800"/></svg>
<svg class="b" style="left:827.8px;top:367.0px" width="13" height="13" viewBox="0 0 13 13" fill="none" stroke="#4a3c4d" stroke-width="1" stroke-linejoin="round"><rect x="1.500" y="1.500" width="10" height="10"/></svg>
<svg class="b" style="left:850.8px;top:367.0px" width="13" height="13" viewBox="0 0 13 13" fill="none" stroke="#4a3c4d" stroke-width="1" stroke-linejoin="round"><rect x="1.500" y="1.500" width="10" height="10" rx="3"/></svg>
<svg class="b" style="left:873.8px;top:367.0px" width="13" height="13" viewBox="0 0 13 13" fill="none" stroke="#4a3c4d" stroke-width="1" stroke-linejoin="round"><rect x="1.500" y="1.500" width="10" height="10" rx="5" stroke-width="1.15" stroke-dasharray="1.700 1.300"/></svg>
<svg class="b" style="left:896.8px;top:367.0px" width="13" height="13" viewBox="0 0 13 13" fill="none" stroke="#4a3c4d" stroke-width="1" stroke-linejoin="round"><path d="M1.500 2 H11.500 V9.500 H9 L7.300 11.800 L5.800 9.500 H1.500 Z"/></svg>
<svg class="b" style="left:919.8px;top:367.0px" width="13" height="13" viewBox="0 0 13 13" fill="none" stroke="#4a3c4d" stroke-width="1" stroke-linejoin="round"><path d="M1.500 11.500 V3.500 L4.200 5.300 L6.500 1.500 L8.800 5.300 L11.500 3.500 V11.500 Z"/></svg>
<svg class="b x" style="left:736px;top:407px" width="35" height="22"><text x="2.50" y="14.03" transform="rotate(0.03 2.50 14.03)" style="font-size:11.20px;letter-spacing:0.059px" fill="#3a2b3d" stroke="#3a2b3d" stroke-width="0.5" stroke-linejoin="round">Color</text></svg>
<div class="b" style="left:890.5px;top:406.0px;width:48.3px;height:22.3px;background:#e9e9f3;border-radius:4px;box-shadow:0 0 0 0.500px #e0e0e6"></div>
<svg class="b x" style="left:736px;top:437px" width="75" height="22"><text x="2.50" y="13.83" transform="rotate(0.03 2.50 13.83)" style="font-size:11.20px;letter-spacing:0.273px" fill="#3a2b3d" stroke="#3a2b3d" stroke-width="0.5" stroke-linejoin="round">Border Color</text></svg>
<div class="b" style="left:890.5px;top:436.0px;width:48.3px;height:22.3px;background:#333;border-radius:4px"></div>
<svg class="b x" style="left:736px;top:467px" width="49" height="22"><text x="2.50" y="13.63" transform="rotate(0.03 2.50 13.63)" style="font-size:11.20px;letter-spacing:0.505px" fill="#3a2b3d" stroke="#3a2b3d" stroke-width="0.5" stroke-linejoin="round">Opacity</text></svg>
<div class="b" style="left:842.0px;top:474.6px;width:92.0px;height:4.8px;background:#9d949f;border-radius:3px"></div>
<div class="b" style="left:926.0px;top:470.5px;width:13.0px;height:13.0px;background:#fff;border:1px solid #968d99;border-radius:50%;box-sizing:border-box"></div>
<svg class="b x" style="left:736px;top:506px" width="131" height="22"><text x="2.50" y="13.63" transform="rotate(0.03 2.50 13.63)" style="font-size:11.20px;letter-spacing:0.314px" fill="#3a2b3d" stroke="#3a2b3d" stroke-width="0.5" stroke-linejoin="round">Columns (for snapping)</text></svg>
<div class="b" style="left:739.0px;top:529.7px;width:199.7px;height:22.0px;background:#fff;border:1px solid #e2e2e2;border-radius:4px;box-sizing:border-box;box-shadow:0 1px 1px rgba(0,0,0,.04)"></div>
<svg class="b x" style="left:747px;top:531px" width="39" height="22"><text x="2.50" y="13.83" transform="rotate(0.03 2.50 13.83)" style="font-size:11.20px;letter-spacing:0.242px" fill="#3a2b3d">1 (off)</text></svg>
<svg class="b" style="left:923px;top:537.500px" width="9" height="7" viewBox="0 0 9 7" fill="none" stroke="#a39ba6" stroke-width="1" stroke-linecap="round" stroke-linejoin="round"><path d="M1.300 2 L4.500 5.200 L7.700 2"/></svg>
<div class="b" style="left:732.0px;top:552.0px;width:214.0px;height:51.0px;border-radius:0 0 6px 6px;background:linear-gradient(180deg,rgba(255,255,255,0),rgba(255,255,255,.85) 45%,#fff)"></div>
<svg class="b x" style="left:736px;top:575px" width="35" height="22"><text x="2.50" y="13.63" transform="rotate(0.03 2.50 13.63)" style="font-size:11.20px;letter-spacing:0.213px" fill="#3a2b3d" stroke="#3a2b3d" stroke-width="0.5" stroke-linejoin="round" opacity="0.32">Links</text></svg>
<svg class="b" style="left:922px;top:581.500px;opacity:.8" width="9" height="7" viewBox="0 0 9 7" fill="none" stroke="#a39ba6" stroke-width="1" stroke-linecap="round" stroke-linejoin="round"><path d="M1.300 2 L4.500 5.200 L7.700 2"/></svg>
</div>
<svg class="b" style="left:0;top:0" width="1024" height="638"><rect x="67.9" y="35.9" width="890.7" height="567.9" rx="9.4" fill="none" stroke="#5a4960" stroke-width="1.15"/></svg>
</body></html>
